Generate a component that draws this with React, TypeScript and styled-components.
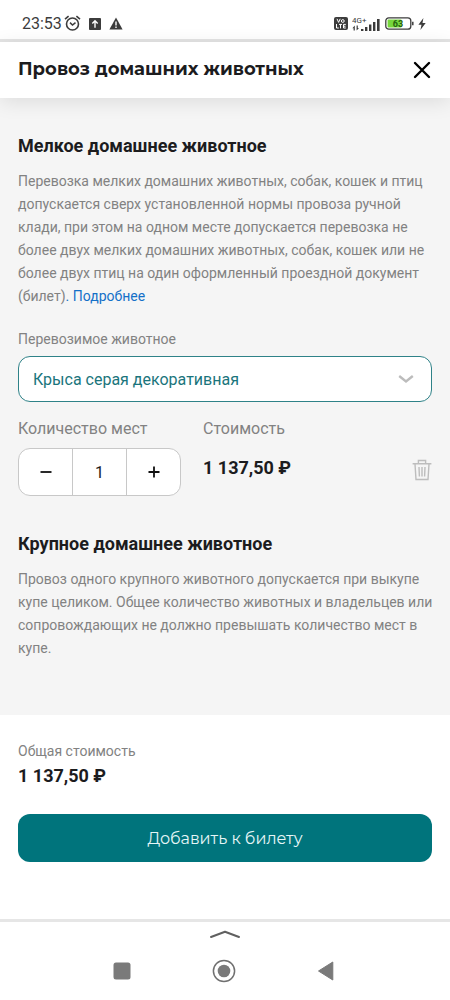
import React, { useState } from "react";
import styled, { createGlobalStyle } from "styled-components";

const GlobalStyle = createGlobalStyle`
  *, *::before, *::after { box-sizing: border-box; }
  body {
    margin: 0;
    background: #fff;
    color: #1c1c1e;
    font-family: Roboto, "Liberation Sans", sans-serif;
  }
  button, select, output { font: inherit; color: inherit; }
`;

const Screen = styled.div`
  display: flex;
  flex-direction: column;
  min-height: 100vh;
`;

const StatusBar = styled.div`
  display: flex;
  align-items: center;
  justify-content: space-between;
  height: 42px;
  padding: 8px 24px 0 22px;
  border-bottom: 3px solid #e4e4e4;
  color: #3c3c3c;
`;

const StatusGroup = styled.div<{ $gap: number }>`
  display: flex;
  align-items: center;
  gap: ${(p) => p.$gap}px;
`;

const Clock = styled.time`
  font-size: 16px;
  line-height: 20px;
  margin-right: -6px;
`;

const Header = styled.header`
  position: relative;
  display: flex;
  align-items: center;
  justify-content: space-between;
  height: 56px;
  padding: 0 18px;
  background: #fff;
  box-shadow: 0 4px 20px rgba(0, 0, 0, 0.1);
`;

const Title = styled.h1`
  margin: 0;
  padding-bottom: 2px;
  font-family: Montserrat, Inter, sans-serif;
  font-size: 18px;
  font-weight: 700;
  line-height: 24px;
`;

const IconButton = styled.button`
  display: flex;
  padding: 0;
  border: 0;
  background: none;
  cursor: pointer;
`;

const Main = styled.main`
  display: flex;
  flex-direction: column;
  gap: 36px;
  padding: 36px 18px 55px;
  background: #f5f5f5;
`;

const SectionTitle = styled.h2`
  margin: 0 0 12px;
  font-size: 18px;
  font-weight: 700;
  line-height: 24px;
`;

const Description = styled.p`
  margin: 0 -8px 0 0;
  color: #828282;
  font-size: 14px;
  line-height: 23px;
`;

const MoreLink = styled.a`
  color: #1470c8;
  text-decoration: none;
`;

const Label = styled.label`
  display: block;
  margin: 21px 0 7px;
  color: #828282;
  font-size: 14px;
  line-height: 20px;
`;

const SelectBox = styled.div`
  display: grid;
  align-items: center;
  > * { grid-area: 1 / 1; }
  > svg { justify-self: end; margin-right: 18px; pointer-events: none; }
`;

const Select = styled.select`
  appearance: none;
  width: 100%;
  height: 46px;
  padding: 0 44px 0 14px;
  border: 1px solid #2f8288;
  border-radius: 12px;
  background: #fff;
  color: #1a757c;
  font-size: 16px;
`;

const OrderRow = styled.div`
  display: flex;
  gap: 22px;
  margin-top: 17px;
`;

const Field = styled.div`
  display: flex;
  flex-direction: column;
  gap: 9px;
`;

const FieldName = styled.span`
  color: #828282;
  font-size: 16px;
  line-height: 20px;
`;

const Stepper = styled.div`
  display: grid;
  grid-template-columns: 53px 54px 54px;
  height: 48px;
  border: 1px solid #c8c8c8;
  border-radius: 12px;
  background: #fff;
  && > * + * { border-left: 1px solid #c8c8c8; }
`;

const StepButton = styled.button`
  display: flex;
  align-items: center;
  justify-content: center;
  padding: 0;
  border: 0;
  background: none;
  cursor: pointer;
`;

const Count = styled.output`
  display: flex;
  align-items: center;
  justify-content: center;
  font-size: 16px;
`;

const Price = styled.strong<{ $row?: boolean }>`
  display: block;
  font-size: 18px;
  font-weight: 700;
  line-height: ${(p) => (p.$row ? 40 : 24)}px;
`;

const DeleteSlot = styled.div`
  display: flex;
  align-items: flex-end;
  margin-left: auto;
  padding-bottom: 15px;
`;

const Footer = styled.footer`
  flex: 1;
  padding: 26px 18px 57px;
  background: #fff;
`;

const TotalName = styled.div`
  margin-bottom: 3px;
  color: #828282;
  font-size: 14px;
  line-height: 20px;
`;

const Submit = styled.button`
  display: block;
  width: 100%;
  height: 48px;
  margin-top: 26px;
  border: 0;
  border-radius: 12px;
  background: #00747c;
  color: #e6f6f7;
  font-family: Montserrat, Inter, sans-serif;
  font-size: 16px;
  cursor: pointer;
`;

const SystemNav = styled.nav`
  display: flex;
  flex-direction: column;
  align-items: center;
  gap: 20px;
  height: 81px;
  padding-top: 8px;
  border-top: 3px solid #e6e6e6;
`;

const NavButtons = styled.div`
  display: flex;
  align-items: center;
  justify-content: space-between;
  width: 50%;
  padding-right: 4px;
`;

const AlarmIcon = () => (
  <svg width="17" height="17" viewBox="0 0 17 17" fill="none" stroke="currentColor">
    <circle cx="8.5" cy="9" r="6" strokeWidth="1.6" />
    <path d="M1 4.2 4.6 1.2M16 4.2 12.4 1.2" strokeWidth="1.6" />
    <path d="M6 7.6 8.5 10l3-2.4" strokeWidth="1.5" />
  </svg>
);

const UploadIcon = () => (
  <svg width="12" height="12" viewBox="0 0 13 13">
    <rect width="13" height="13" rx="1" fill="currentColor" />
    <path d="M6.5 10.5V3.5M3.6 6 6.5 3 9.4 6" fill="none" stroke="#fff" strokeWidth="1.5" />
  </svg>
);

const WarningIcon = () => (
  <svg width="14" height="13" viewBox="0 0 14 13">
    <path d="M7 0.5 13.6 12.5H0.4Z" fill="currentColor" />
    <path d="M7 4.5v4M7 9.5v1.6" stroke="#fff" strokeWidth="1.4" />
  </svg>
);

const VolteIcon = () => (
  <svg width="14" height="13" viewBox="0 0 14 13">
    <rect width="14" height="13" rx="2" fill="currentColor" />
    <g fill="none" stroke="#fff" strokeWidth="1">
      <path d="M3 1.8 4.6 5.4 6.2 1.8" />
      <circle cx="8.8" cy="4" r="1.4" />
      <path d="M2.5 7v4h2.3M5 7.4h3M6.5 7.4V11.4M11.8 7.4H9.5v3.6h2.3M9.5 9.2h2" />
    </g>
  </svg>
);

const SignalIcon = () => (
  <svg width="29" height="16" viewBox="0 0 29 16" fill="currentColor">
    <text x="0" y="7" fontFamily="Roboto, sans-serif" fontSize="8">4G+</text>
    <path d="M0.4 12.2 2.8 9.6V14.6H1.6V12.2ZM7 12 4.6 14.6V9.6H5.8V12Z" />
    <rect x="9" y="13" width="2.4" height="2" />
    <rect x="13" y="11" width="2.4" height="4" />
    <rect x="17" y="8.5" width="2.4" height="6.5" />
    <rect x="21" y="6" width="2.4" height="9" />
    <rect x="25" y="3" width="2.6" height="12" />
  </svg>
);

const BatteryIcon = () => (
  <svg width="29" height="13" viewBox="0 0 29 13">
    <rect x="0.8" y="0.8" width="25" height="11.4" rx="3" fill="#fff" stroke="currentColor" strokeWidth="1.3" />
    <rect x="2.6" y="2.6" width="14" height="7.8" rx="1" fill="#76d73c" />
    <path d="M27.8 4.8v3.4" stroke="currentColor" strokeWidth="1.5" />
    <text x="13" y="9.8" textAnchor="middle" fontFamily="Roboto, sans-serif" fontSize="9" fontWeight="700" fill="#24620f">63</text>
  </svg>
);

const BoltIcon = () => (
  <svg width="8" height="12" viewBox="0 0 8 12" fill="currentColor">
    <path d="M5.4 0 0.4 6.8H3.5L2.4 12 7.7 4.9H4.5Z" />
  </svg>
);

const CloseIcon = () => (
  <svg width="20" height="20" viewBox="0 0 20 20" fill="none" stroke="#000" strokeWidth="2.4" strokeLinecap="round">
    <path d="M3 3 17 17M17 3 3 17" />
  </svg>
);

const ChevronIcon = () => (
  <svg width="16" height="10" viewBox="0 0 16 10" fill="none" stroke="#bcbcbc" strokeWidth="2.4">
    <path d="M1.2 2 8 7.4 14.8 2" />
  </svg>
);

const TrashIcon = () => (
  <svg width="20" height="22" viewBox="0 0 20 22" fill="none" stroke="#bdbdbd" strokeWidth="1.4">
    <path d="M0.6 4.7H19.4M6.4 4.5V1.5h7.2V4.5M3 5 4 20.5H16L17 5M7 8 7.4 17.5M10 8V17.5M13 8 12.6 17.5" />
  </svg>
);

const StepIcon = ({ plus }: { plus?: boolean }) => (
  <svg width="12" height="12" viewBox="0 0 12 12" stroke="#111" strokeWidth="1.8">
    <path d={plus ? "M0.5 6H11.5M6 0.5V11.5" : "M0.5 6H11.5"} />
  </svg>
);

const HandleIcon = () => (
  <svg width="32" height="9" viewBox="0 0 32 9" fill="none" stroke="#606060" strokeWidth="2" strokeLinecap="round" strokeLinejoin="round">
    <path d="M2 7 16 1.8 30 7" />
  </svg>
);

const RecentsIcon = () => (
  <svg width="18" height="18" viewBox="0 0 18 18">
    <rect x="0.5" y="0.5" width="17" height="17" rx="2.5" fill="#7a7a7a" />
  </svg>
);

const HomeIcon = () => (
  <svg width="24" height="24" viewBox="0 0 24 24">
    <circle cx="12" cy="12" r="10.6" fill="none" stroke="#707070" strokeWidth="1.5" />
    <circle cx="12" cy="12" r="6.3" fill="#7a7a7a" />
  </svg>
);

const BackIcon = () => (
  <svg width="17" height="20" viewBox="0 0 17 20">
    <path d="M1.5 10 15.8 1V19Z" fill="#7a7a7a" stroke="#7a7a7a" strokeLinejoin="round" />
  </svg>
);

const UNIT_PRICE = 1137.5;

const formatPrice = (value: number) => {
  const [whole, cents] = value.toFixed(2).split(".");
  return `${whole.replace(/\B(?=(\d{3})+$)/g, "\u00a0")},${cents}\u00a0₽`;
};

export default function App() {
  const [count, setCount] = useState(1);
  const total = formatPrice(UNIT_PRICE * count);

  return (
    <>
      <GlobalStyle />
      <Screen>
        <StatusBar>
          <StatusGroup $gap={8}>
            <Clock>23:53</Clock>
            <AlarmIcon />
            <UploadIcon />
            <WarningIcon />
          </StatusGroup>
          <StatusGroup $gap={4}>
            <VolteIcon />
            <SignalIcon />
            <BatteryIcon />
            <BoltIcon />
          </StatusGroup>
        </StatusBar>

        <Header>
          <Title>Провоз домашних животных</Title>
          <IconButton type="button" aria-label="Закрыть">
            <CloseIcon />
          </IconButton>
        </Header>

        <Main>
          <section>
            <SectionTitle>Мелкое домашнее животное</SectionTitle>
            <Description>
              Перевозка мелких домашних животных, собак, кошек и птиц допускается сверх
              установленной нормы провоза ручной клади, при этом на одном месте допускается
              перевозка не более двух мелких домашних животных, собак, кошек или не более двух
              птиц на один оформленный проездной документ (билет)
              <MoreLink href="#more">. Подробнее</MoreLink>
            </Description>

            <Label htmlFor="animal">Перевозимое животное</Label>
            <SelectBox>
              <Select id="animal" defaultValue="rat">
                <option value="rat">Крыса серая декоративная</option>
              </Select>
              <ChevronIcon />
            </SelectBox>

            <OrderRow>
              <Field>
                <FieldName id="seats">Количество мест</FieldName>
                <Stepper role="group" aria-labelledby="seats">
                  <StepButton type="button" aria-label="Уменьшить" onClick={() => setCount(Math.max(1, count - 1))}>
                    <StepIcon />
                  </StepButton>
                  <Count>{count}</Count>
                  <StepButton type="button" aria-label="Увеличить" onClick={() => setCount(Math.min(2, count + 1))}>
                    <StepIcon plus />
                  </StepButton>
                </Stepper>
              </Field>
              <Field>
                <FieldName>Стоимость</FieldName>
                <Price $row>{total}</Price>
              </Field>
              <DeleteSlot>
                <IconButton type="button" aria-label="Удалить">
                  <TrashIcon />
                </IconButton>
              </DeleteSlot>
            </OrderRow>
          </section>

          <section>
            <SectionTitle>Крупное домашнее животное</SectionTitle>
            <Description>
              Провоз одного крупного животного допускается при выкупе купе целиком. Общее
              количество животных и владельцев или сопровождающих не должно превышать количество
              мест в купе.
            </Description>
          </section>
        </Main>

        <Footer>
          <TotalName>Общая стоимость</TotalName>
          <Price>{total}</Price>
          <Submit type="button">Добавить к билету</Submit>
        </Footer>

        <SystemNav aria-label="Навигация">
          <HandleIcon />
          <NavButtons>
            <IconButton type="button" aria-label="Недавние"><RecentsIcon /></IconButton>
            <IconButton type="button" aria-label="Домой"><HomeIcon /></IconButton>
            <IconButton type="button" aria-label="Назад"><BackIcon /></IconButton>
          </NavButtons>
        </SystemNav>
      </Screen>
    </>
  );
}
